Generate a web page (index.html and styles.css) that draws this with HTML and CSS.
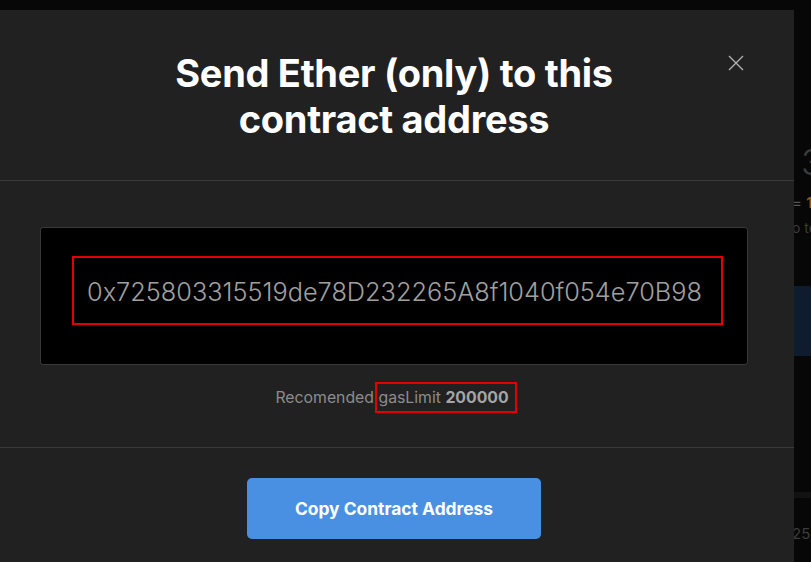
FILE: index.html
```html
<!DOCTYPE html>
<html lang="en">
<head>
    <meta charset="UTF-8">
    <meta name="viewport" content="width=device-width, initial-scale=1.0">
    <title>Send Ether</title>
    <link rel="stylesheet" href="styles.css">
</head>
<body>
    <!-- page behind the modal, only its right edge shows -->
    <div class="page-behind">
        <div class="stat-big">3</div>
        <div class="stat-rate">= <span class="rate-num">1</span></div>
        <div class="stat-note">o to</div>
        <div class="stat-panel"></div>
        <div class="stat-band"></div>
        <div class="stat-small">25,</div>
    </div>

    <div class="modal">
        <div class="modal-header">
            <h1>Send Ether (only) to this<br>contract address</h1>
            <button class="close-btn" aria-label="Close">
                <svg width="16" height="16" viewBox="0 0 16 16">
                    <path d="M1 1 L15 15 M15 1 L1 15" stroke="#b4b4b4" stroke-width="1.3" fill="none"/>
                </svg>
            </button>
        </div>

        <div class="modal-body">
            <div class="address-box">
                <div class="address-frame">0x725803315519de78D232265A8f1040f054e70B98</div>
            </div>
            <p class="gas-line">Recomended <span class="gas-frame">gasLimit <b>200000</b></span></p>
        </div>

        <div class="modal-footer">
            <button class="copy-btn">Copy Contract Address</button>
        </div>
    </div>
</body>
</html>
```

FILE: styles.css
```css
body {
    margin: 0;
    background: #070707;
    font-family: 'Inter', sans-serif;
    height: 562px;
    overflow: hidden;
    position: relative;
}

.page-behind {
    position: absolute;
    left: 780px;
    top: 0;
    width: 40px;
    height: 562px;
    color: #3c3c3c;
    z-index: 0;
}

.stat-big {
    position: absolute;
    left: 21px;
    top: 140px;
    font-size: 36px;
    font-weight: 300;
}

.stat-rate {
    position: absolute;
    left: 12px;
    top: 193px;
    font-size: 15px;
    color: #555;
}

.rate-num {
    color: #8d5b12;
    font-weight: 700;
}

.stat-note {
    position: absolute;
    left: 12px;
    top: 219px;
    font-size: 14px;
}

.stat-panel {
    position: absolute;
    left: 0;
    top: 286px;
    width: 40px;
    height: 70px;
    background: #0f1c30;
}

.stat-band {
    position: absolute;
    left: 0;
    top: 492px;
    width: 40px;
    height: 6px;
    background: #121212;
}

.stat-small {
    position: absolute;
    left: 12px;
    top: 524px;
    font-size: 15px;
}

.modal {
    position: relative;
    z-index: 1;
    margin-top: 10px;
    width: 794px;
    height: 552px;
    background: #212121;
}

.modal-header {
    position: relative;
    padding: 40px 6px 38px 0;
    border-bottom: 1px solid #393939;
    text-align: center;
}

.modal-header h1 {
    margin: 0;
    font-size: 38px;
    line-height: 46px;
    font-weight: 700;
    color: #fff;
    letter-spacing: -0.3px;
}

.close-btn {
    position: absolute;
    left: 728px;
    top: 45px;
    width: 16px;
    height: 16px;
    padding: 0;
    border: none;
    background: none;
    cursor: pointer;
}

.close-btn svg {
    display: block;
}

.modal-body {
    padding: 46px 46px 0 40px;
    height: 220px;
    border-bottom: 1px solid #393939;
}

.address-box {
    background: #000;
    border: 1px solid #383838;
    border-radius: 3px;
    padding: 28px 24px 39px 31px;
}

.address-frame {
    border: 2px solid #e20000;
    height: 65px;
    line-height: 67px;
    text-align: center;
    font-size: 25.3px;
    font-weight: 300;
    color: #a0a0a0;
    padding-right: 6px;
}

.gas-line {
    margin: 17px 0 0;
    text-align: center;
    font-size: 15.8px;
    color: #8c8c8c;
    padding-left: 4px;
}

.gas-frame {
    display: inline-block;
    border: 2px solid #e20000;
    padding: 4px 6px 4px 1px;
    margin-left: -3px;
}

.gas-frame b {
    font-weight: 700;
    color: #a5a5a5;
}

.modal-footer {
    padding: 30px 6px 0 0;
    text-align: center;
}

.copy-btn {
    width: 294px;
    height: 61px;
    border: none;
    border-radius: 5px;
    background: #4a90e2;
    color: #fff;
    font-family: 'Inter', sans-serif;
    font-size: 17.4px;
    font-weight: 700;
    cursor: pointer;
}
```
